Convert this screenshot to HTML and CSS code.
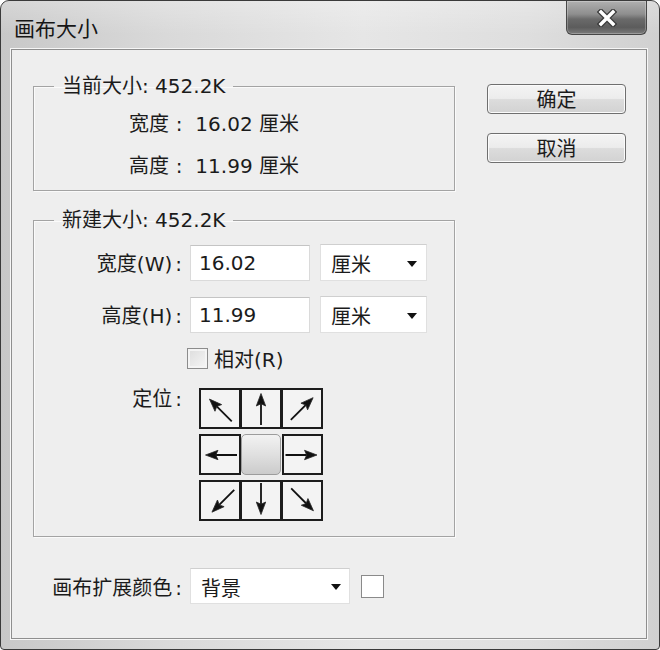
FILE: index.html
```html
<!DOCTYPE html>
<html lang="zh-CN">
<head>
<meta charset="utf-8">
<title>画布大小</title>
<link rel="stylesheet" href="styles.css">
</head>
<body>
<svg class="defs" aria-hidden="true">
  <symbol id="up" viewBox="0 0 37 37">
    <path d="M18.5 35 V12" stroke="#111" stroke-width="1.8" fill="none"/>
    <path d="M18.5 3.5 L13.8 16 L18.5 13.8 L23.2 16 Z" fill="#111" stroke="#2a2a2a" stroke-width="0.8" stroke-linejoin="round"/>
  </symbol>
</svg>
<div class="window">
  <div class="titlebar">
    <span class="title">画布大小</span>
    <div class="close">
      <svg viewBox="0 0 20 18" width="20" height="18">
        <path d="M4 3 L16 15 M16 3 L4 15" stroke="#3a3a3a" stroke-width="6" stroke-linecap="square"/>
        <path d="M4 3 L16 15 M16 3 L4 15" stroke="#fff" stroke-width="3.4" stroke-linecap="square"/>
      </svg>
    </div>
  </div>
  <div class="client">
    <div class="main">
      <div class="groups">
        <fieldset class="group g1">
          <legend>当前大小: 452.2K</legend>
          <div class="info-row">宽度<span class="wide-colon">:</span> 16.02 厘米</div>
          <div class="info-row second">高度<span class="wide-colon">:</span> 11.99 厘米</div>
        </fieldset>
        <fieldset class="group g2">
          <legend>新建大小: 452.2K</legend>
          <div class="form-row r1">
            <span class="label">宽度(W)<span class="colon">:</span></span>
            <div class="input">16.02</div>
            <div class="select unit"><span>厘米</span><svg class="caret" viewBox="0 0 10 6" width="10" height="6"><path d="M0 0 H10 L5 6 Z" fill="#111"/></svg></div>
          </div>
          <div class="form-row r2">
            <span class="label">高度(H)<span class="colon">:</span></span>
            <div class="input">11.99</div>
            <div class="select unit"><span>厘米</span><svg class="caret" viewBox="0 0 10 6" width="10" height="6"><path d="M0 0 H10 L5 6 Z" fill="#111"/></svg></div>
          </div>
          <div class="check-row">
            <span class="checkbox"></span><span>相对(R)</span>
          </div>
          <div class="anchor-row">
            <span class="label anchor-label">定位<span class="colon">:</span></span>
            <div class="anchor-grid">
              <div class="cell"><svg viewBox="0 0 37 37"><use href="#up" transform="rotate(-45 20 19)"/></svg></div>
              <div class="cell"><svg viewBox="0 0 37 37"><use href="#up"/></svg></div>
              <div class="cell"><svg viewBox="0 0 37 37"><use href="#up" transform="rotate(45 19 19)"/></svg></div>
              <div class="cell"><svg viewBox="0 0 37 37"><use href="#up" transform="rotate(-90 19 18.5)"/></svg></div>
              <div class="cell center"></div>
              <div class="cell"><svg viewBox="0 0 37 37"><use href="#up" transform="rotate(90 18 18.5)"/></svg></div>
              <div class="cell"><svg viewBox="0 0 37 37"><use href="#up" transform="rotate(-135 20 18.5)"/></svg></div>
              <div class="cell"><svg viewBox="0 0 37 37"><use href="#up" transform="rotate(180 18.5 18)"/></svg></div>
              <div class="cell"><svg viewBox="0 0 37 37"><use href="#up" transform="rotate(135 19 18.5)"/></svg></div>
            </div>
          </div>
        </fieldset>
      </div>
      <div class="buttons">
        <div class="btn">确定</div>
        <div class="btn">取消</div>
      </div>
    </div>
    <div class="bottom-row">
      <span class="label bottom-label">画布扩展颜色<span class="colon">:</span></span>
      <div class="select ext"><span>背景</span><svg class="caret" viewBox="0 0 10 6" width="10" height="6"><path d="M0 0 H10 L5 6 Z" fill="#111"/></svg></div>
      <span class="swatch"></span>
    </div>
  </div>
</div>
</body>
</html>
```

FILE: styles.css
```css
html, body {
  margin: 0;
  padding: 0;
  background: #ffffff;
}

body {
  font-family: "DejaVu Sans", "Noto Sans CJK SC", sans-serif;
  font-size: 20px;
  color: #1b1b1b;
}

.defs {
  display: block;
  width: 0;
  height: 0;
  overflow: hidden;
}

.window {
  width: 660px;
  height: 650px;
  box-sizing: border-box;
  border: 1px solid #3a3a3a;
  border-radius: 9px 9px 4px 4px;
  background: linear-gradient(to right, #c8c8c8 0%, #d9d9d9 25%, #e6e6e6 55%, #dedede 80%, #d0d0d0 100%);
  display: flex;
  flex-direction: column;
  overflow: hidden;
}

.titlebar {
  height: 48px;
  flex: none;
  display: flex;
  justify-content: space-between;
  align-items: flex-start;
  background: linear-gradient(to bottom, rgba(255,255,255,0.25), rgba(255,255,255,0) 70%);
}

.title {
  padding: 14px 0 0 13px;
  font-family: "Noto Sans CJK SC", sans-serif;
  font-size: 21px;
  line-height: 24px;
  color: #161616;
}

.close {
  width: 81px;
  height: 34px;
  box-sizing: border-box;
  margin-right: 12px;
  border: 1px solid #474747;
  border-top: none;
  border-radius: 0 0 6px 6px;
  background: linear-gradient(to bottom, #b0b0b0 0%, #8e8e8e 40%, #6a6a6a 55%, #5c5c5c 80%, #7c7c7c 100%);
  box-shadow: inset 0 0 0 1px rgba(255,255,255,0.25);
  display: flex;
  align-items: center;
  justify-content: center;
}

.client {
  flex: 1;
  margin: 0 12px 10px 10px;
  border: 1px solid #8e8e8e;
  background: #eeeeee;
  box-shadow: 0 0 0 1px #f6f6f6;
  padding: 26px 0 0 21px;
}

.main {
  display: grid;
  grid-template-columns: 422px 139px;
  column-gap: 32px;
  align-items: start;
}

.group {
  margin: 0;
  padding: 0;
  min-inline-size: 0;
  border: 1px solid #a3a3a3;
  box-shadow: inset 1px 1px 0 #fafafa, 1px 1px 0 #fafafa;
}

.group legend {
  margin-left: 20px;
  padding: 0 8px 0 8px;
  line-height: 20px;
}

.wide-colon {
  display: inline-block;
  width: 1em;
  text-align: center;
}

.colon {
  margin-left: 3px;
}

.g1 {
  padding: 13px 0 9px 0;
}

.info-row {
  padding-left: 95px;
  line-height: 30px;
  white-space: nowrap;
}

.info-row.second {
  margin-top: 12px;
}

.g2 {
  margin-top: 19px;
  padding: 14px 0 15px 0;
}

.form-row {
  display: flex;
  align-items: center;
  height: 37px;
}

.form-row.r2 {
  margin-top: 15px;
}

.label {
  width: 148px;
  margin-right: 8px;
  text-align: right;
  white-space: nowrap;
  flex: none;
}

.input {
  width: 120px;
  height: 36px;
  box-sizing: border-box;
  background: #ffffff;
  border: 1px solid #dadada;
  border-top-color: #c4c4c4;
  padding-left: 8px;
  line-height: 34px;
}

.select {
  height: 37px;
  box-sizing: border-box;
  background: #ffffff;
  border: 1px solid #e0e0e0;
  border-top-color: #cfcfcf;
  display: flex;
  align-items: center;
  justify-content: space-between;
  padding: 2px 9px 0 10px;
  font-family: "Noto Sans CJK SC", sans-serif;
}

.select.unit {
  width: 107px;
  margin-left: 10px;
}

.caret {
  flex: none;
}

.check-row {
  margin-top: 14px;
  margin-left: 153px;
  height: 22px;
  display: flex;
  align-items: center;
  gap: 6px;
}

.checkbox {
  width: 21px;
  height: 21px;
  box-sizing: border-box;
  border: 1px solid #8c8c8c;
  background: linear-gradient(135deg, #dcdcdc, #f6f6f6);
  box-shadow: inset 0 0 0 2px #f4f4f4;
}

.anchor-row {
  margin-top: 19px;
  display: flex;
  align-items: flex-start;
}

.anchor-label {
  line-height: 22px;
  margin-right: 17px;
}

.anchor-grid {
  display: grid;
  grid-template-columns: 42px 41px 41px;
  grid-auto-rows: 41px;
  row-gap: 5px;
}

.cell {
  box-sizing: border-box;
  border: 2px solid #1c1c1c;
  background: #f3f3f3;
}

.cell:nth-child(3n+2),
.cell:nth-child(3n) {
  border-left-width: 1px;
}

.cell:nth-child(6) {
  border-left-width: 2px;
}

.cell.center {
  border: 1px solid #9c9c9c;
  border-radius: 5px;
  margin: 0 1px 0 0;
  background: linear-gradient(to bottom, #f2f2f2 0%, #e0e0e0 50%, #cbcbcb 100%);
}

.cell svg {
  display: block;
  width: 100%;
  height: 100%;
}

.buttons {
  margin-top: 8px;
  display: flex;
  flex-direction: column;
  gap: 19px;
}

.btn {
  height: 30px;
  box-sizing: border-box;
  border: 1px solid #6f6f6f;
  border-radius: 4px;
  background: linear-gradient(to bottom, #f4f4f4 0%, #ececec 48%, #dcdcdc 52%, #d2d2d2 100%);
  box-shadow: inset 0 0 0 1px #fbfbfb;
  text-align: center;
  line-height: 28px;
  font-family: "Noto Sans CJK SC", sans-serif;
}

.bottom-row {
  margin-top: 31px;
  display: flex;
  align-items: center;
}

.bottom-label {
  width: 149px;
}

.select.ext {
  width: 160px;
  height: 36px;
  padding-right: 8px;
}

.swatch {
  width: 23px;
  height: 23px;
  box-sizing: border-box;
  margin-left: 11px;
  border: 1px solid #8a8a8a;
  background: #ffffff;
}
```
